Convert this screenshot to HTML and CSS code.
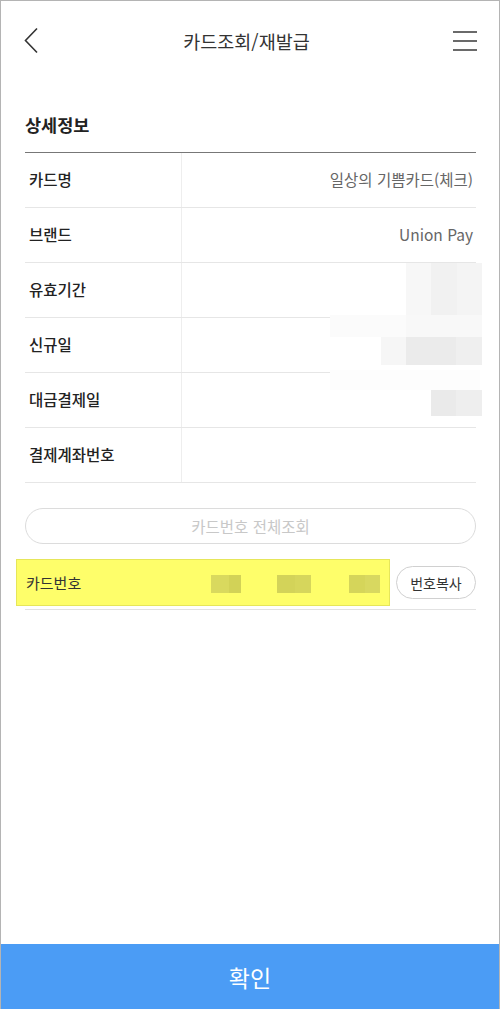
FILE: index.html
```html
<!DOCTYPE html>
<html lang="ko">
<head>
<meta charset="utf-8">
<title>카드조회/재발급</title>
<link rel="stylesheet" href="styles.css">
</head>
<body>
<div class="app">
  <header class="topbar">
    <svg class="icon-back" width="16" height="28" viewBox="0 0 16 28">
      <polyline points="13,1.5 1.5,13.5 13,25.5" fill="none" stroke="#333" stroke-width="1.6"/>
    </svg>
    <h1 class="title">카드조회/재발급</h1>
    <svg class="icon-menu" width="24" height="22" viewBox="0 0 24 22">
      <line x1="0" y1="2" x2="24" y2="2" stroke="#444" stroke-width="1.6"/>
      <line x1="0" y1="11" x2="24" y2="11" stroke="#444" stroke-width="1.6"/>
      <line x1="0" y1="20" x2="24" y2="20" stroke="#444" stroke-width="1.6"/>
    </svg>
  </header>

  <main class="content">
    <h2 class="section-title">상세정보</h2>
    <div class="info-table">
      <div class="row"><div class="label">카드명</div><div class="value">일상의 기쁨카드(체크)</div></div>
      <div class="row"><div class="label">브랜드</div><div class="value">Union Pay</div></div>
      <div class="row"><div class="label">유효기간</div><div class="value"></div></div>
      <div class="row"><div class="label">신규일</div><div class="value"></div></div>
      <div class="row"><div class="label">대금결제일</div><div class="value"></div></div>
      <div class="row"><div class="label">결제계좌번호</div><div class="value"></div></div>
      <svg class="redact" width="152" height="153" viewBox="0 0 152 153">
        <rect x="76" y="0" width="25" height="52" fill="#f7f7f7"/>
        <rect x="101" y="0" width="26" height="52" fill="#f1f1f1"/>
        <rect x="127" y="0" width="25" height="52" fill="#f4f4f4"/>
        <rect x="0" y="52" width="76" height="22" fill="#fbfbfb"/>
        <rect x="76" y="52" width="76" height="22" fill="#f8f8f8"/>
        <rect x="51" y="74" width="25" height="28" fill="#f6f6f6"/>
        <rect x="76" y="74" width="50" height="28" fill="#ebebeb"/>
        <rect x="126" y="74" width="26" height="28" fill="#efefef"/>
        <rect x="0" y="107" width="150" height="20" fill="#fdfdfd"/>
        <rect x="101" y="127" width="25" height="26" fill="#eaeaea"/>
        <rect x="126" y="127" width="26" height="26" fill="#eeeeee"/>
      </svg>
    </div>

    <button class="btn-outline" type="button">카드번호 전체조회</button>

    <div class="card-row">
      <div class="highlight">
        <span class="card-label">카드번호</span>
        <svg class="card-blur" width="169" height="18" viewBox="0 0 169 18">
          <rect x="0" y="0" width="18" height="18" fill="#d9d95e"/>
          <rect x="18" y="0" width="12" height="18" fill="#d2d257"/>
          <rect x="66" y="0" width="18" height="18" fill="#d3d359"/>
          <rect x="84" y="0" width="16" height="18" fill="#d6d65c"/>
          <rect x="138" y="0" width="16" height="18" fill="#d5d55a"/>
          <rect x="154" y="0" width="15" height="18" fill="#d8d860"/>
        </svg>
      </div>
      <button class="btn-copy" type="button">번호복사</button>
    </div>
  </main>

  <button class="btn-confirm" type="button">확인</button>
</div>
</body>
</html>
```

FILE: styles.css
```css
* { box-sizing: border-box; }

html, body {
  margin: 0;
  padding: 0;
  background: #fff;
}

body {
  font-family: "Noto Sans CJK KR", "Noto Sans", sans-serif;
  color: #222;
}

.app {
  width: 500px;
  height: 1009px;
  display: flex;
  flex-direction: column;
  border: 1px solid #b4b4b4;
  border-bottom: none;
}

.topbar {
  height: 79px;
  display: flex;
  align-items: center;
  justify-content: space-between;
  padding: 0 22px 0 23px;
}

.icon-back { display: block; margin-top: 1px; }
.icon-menu { display: block; margin-top: 0; }

.title {
  margin: 0;
  font-size: 18.5px;
  font-weight: 400;
  color: #333;
  line-height: 26px;
}

.content {
  padding: 0 23px 0 24px;
  display: flex;
  flex-direction: column;
}

.section-title {
  margin: 0;
  padding: 32px 0 15px;
  font-size: 17.5px;
  font-weight: 700;
  line-height: 25px;
  color: #222;
}

.info-table {
  position: relative;
  border-top: 1px solid #777;
}

.row {
  display: flex;
  height: 55px;
  border-bottom: 1px solid #e6e6e6;
}

.label {
  width: 157px;
  padding-left: 4px;
  padding-bottom: 2px;
  display: flex;
  align-items: center;
  font-size: 15.5px;
  font-weight: 500;
  color: #222;
  border-right: 1px solid #eeeeee;
}

.value {
  flex: 1;
  display: flex;
  align-items: center;
  justify-content: flex-end;
  padding-right: 3px;
  padding-bottom: 2px;
  font-size: 15.5px;
  color: #666;
}

.redact {
  position: absolute;
  left: 305px;
  top: 110px;
  display: block;
}

.btn-outline {
  margin-top: 25px;
  height: 36px;
  width: 100%;
  border: 1px solid #dcdcdc;
  border-radius: 18px;
  background: #fff;
  font-family: inherit;
  font-size: 15.5px;
  color: #c8c8c8;
  padding: 0;
}

.card-row {
  margin-top: 11px;
  display: flex;
  align-items: center;
  padding: 4px 0 3px;
  border-bottom: 1px solid #e2e2e2;
}

.highlight {
  margin-left: -9px;
  width: 374px;
  height: 47px;
  display: flex;
  align-items: center;
  padding: 0 9px;
  background: #fefe6a;
  border: 1px solid #e6e65a;
}

.card-label {
  font-size: 15px;
  color: #333;
}

.card-blur {
  margin-left: auto;
  margin-top: 2px;
  display: block;
}

.btn-copy {
  margin-left: auto;
  width: 80px;
  height: 33px;
  border: 1px solid #d0d0d0;
  border-radius: 17px;
  background: #fff;
  font-family: inherit;
  font-size: 14px;
  color: #333;
  padding: 0;
}

.btn-confirm {
  margin-top: auto;
  height: 65px;
  width: 100%;
  border: none;
  background: #4b9cf5;
  color: #fff;
  font-family: inherit;
  font-size: 23px;
  padding: 0;
}
```
